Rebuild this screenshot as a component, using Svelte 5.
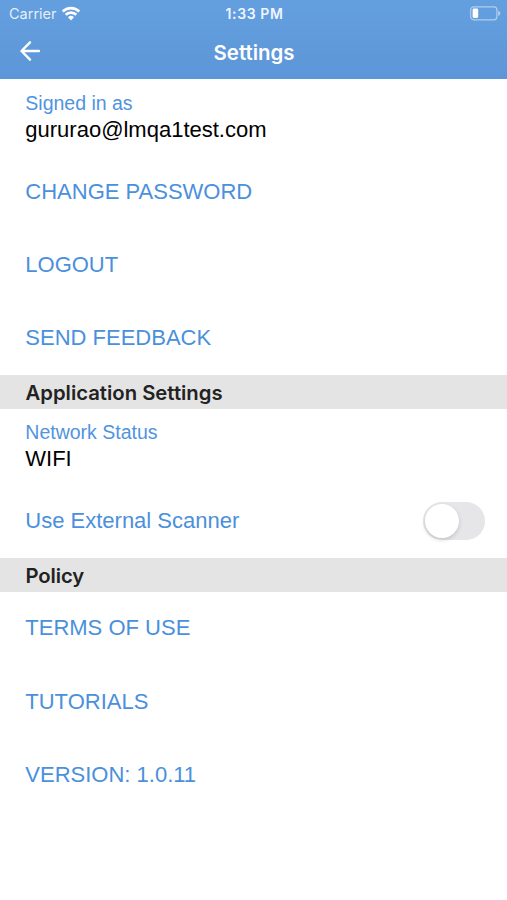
<script>
    const email = 'gururao@lmqa1test.com';
    const network = 'WIFI';

    const accountLinks = ['CHANGE PASSWORD', 'LOGOUT', 'SEND FEEDBACK'];
    const policyLinks  = ['TERMS OF USE', 'TUTORIALS', 'VERSION: 1.0.11'];

    let externalScanner = false;
</script>

<div class="screen">
    <header>
        <div class="status">
            <div class="carrier">
                <span>Carrier</span>
                <svg width="20" height="15" viewBox="0 0 20 15">
                    <g fill="none" stroke="#fff" stroke-width="2.7">
                        <path d="M1.7 5.5a11.8 11.8 0 0 1 16.6 0" />
                        <path d="M4.7 8.8a7.5 7.5 0 0 1 10.6 0" />
                    </g>
                    <path d="M7 11.3a4.3 4.3 0 0 1 6 0L10 14.5z" fill="#fff" />
                </svg>
            </div>
            <div class="time">1:33 PM</div>
            <div class="battery">
                <svg width="31" height="15" viewBox="0 0 31 15">
                    <rect x=".7" y=".8" width="26.2" height="13" rx="3" fill="none" stroke="#fff" stroke-opacity=".5" stroke-width="1.2" />
                    <rect x="2.6" y="2.6" width="5.6" height="9.4" rx="1.4" fill="#fff" />
                    <path d="M28.2 4.7c2.8 1 2.8 4.2 0 5.2z" fill="#fff" fill-opacity=".5" />
                </svg>
            </div>
        </div>
        <div class="nav">
            <button class="back" aria-label="Back">
                <svg width="20" height="20" viewBox="0 0 20 20">
                    <path d="M10 1.3L1.5 10l8.5 8.7M1.8 10H19" fill="none" stroke="#fff" stroke-width="2.4" stroke-linecap="round" stroke-linejoin="round" />
                </svg>
            </button>
            <h1>Settings</h1>
        </div>
    </header>

    <div class="info">
        <p class="label">Signed in as</p>
        <p class="value">{email}</p>
    </div>

    {#each accountLinks as link}
        <button class="row">{link}</button>
    {/each}

    <h2>Application Settings</h2>

    <div class="info">
        <p class="label">Network Status</p>
        <p class="value">{network}</p>
    </div>
    <div class="row scanner">
        <span>Use External Scanner</span>
        <button
            class="switch"
            class:on={externalScanner}
            role="switch"
            aria-checked={externalScanner}
            aria-label="Use External Scanner"
            on:click={() => externalScanner = !externalScanner}
        ><span class="knob"></span></button>
    </div>

    <h2 class="policy">Policy</h2>

    {#each policyLinks as link}
        <button class="row">{link}</button>
    {/each}
</div>

<style>
    :global(body) {
        background-color: #fff;
    }
    .screen {
        box-sizing: border-box;
        width: 100%;
        height: 900px;
        overflow: hidden;
        font-family: "Liberation Sans", Arial, sans-serif;
        background-color: #fff;
    }
    h1, h2, p {
        margin: 0;
    }
    svg {
        display: block;
    }
    button {
        border: 0;
        padding: 0;
        background: none;
        font-family: inherit;
        cursor: pointer;
    }

    header {
        height: 79.4px;
        color: #fff;
        font-family: Inter, sans-serif;
        background: linear-gradient(#649fdf, #5c96d8);
    }
    .status {
        display: grid;
        grid-template-columns: 1fr auto 1fr;
        align-items: center;
        height: 27px;
        padding: 0 6px 0 9px;
        font-size: 14.5px;
    }
    .carrier {
        display: flex;
        align-items: center;
        gap: 4px;
        color: rgb(255 255 255 / 85%);
    }
    .time {
        font-size: 14px;
        font-weight: 600;
        letter-spacing: .6px;
        margin-right: 1px;
        color: #eef6ff;
    }
    .battery {
        justify-self: end;
    }
    .nav {
        display: grid;
        grid-template-columns: 60px 1fr 60px;
        align-items: center;
        height: 48px;
    }
    .back {
        padding-left: 20px;
    }
    h1 {
        padding: 2px 0 0 1px;
        font-size: 20.4px;
        font-weight: 600;
        text-align: center;
    }

    .info {
        box-sizing: border-box;
        height: 75.5px;
        padding: 10.4px 25.3px 0;
    }
    .label {
        font-size: 19.5px;
        line-height: 27px;
        color: #4f94e0;
    }
    .value {
        font-size: 22px;
        line-height: 25px;
        color: #000;
    }
    .row {
        display: flex;
        align-items: center;
        box-sizing: border-box;
        width: 100%;
        height: 73.3px;
        padding: 0 22px 0 25.3px;
        font-size: 22px;
        color: #4a90dc;
    }

    h2 {
        display: flex;
        align-items: center;
        box-sizing: border-box;
        height: 34px;
        padding: 1px 0 0 25.5px;
        font-family: Inter, sans-serif;
        font-size: 20.3px;
        font-weight: 600;
        color: #222;
        background-color: #e4e4e4;
    }
    .policy {
        letter-spacing: -.1px;
    }

    .scanner {
        justify-content: space-between;
    }
    .switch {
        width: 62px;
        height: 38px;
        padding: 2px;
        border-radius: 19px;
        background-color: #e6e6e9;
    }
    .switch.on {
        background-color: #4a90dc;
    }
    .knob {
        display: block;
        width: 34px;
        height: 34px;
        border-radius: 50%;
        background-color: #fff;
        box-shadow: 0 2px 4px rgb(0 0 0 / 15%);
    }
    .on .knob {
        margin-left: 24px;
    }
</style>
